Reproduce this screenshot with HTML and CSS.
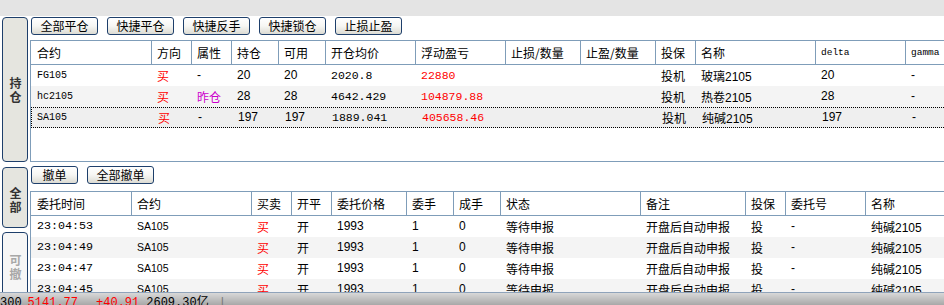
FILE: index.html
```html
<!DOCTYPE html>
<html lang="zh">
<head>
<meta charset="utf-8">
<title>持仓</title>
<link rel="stylesheet" href="styles.css">
</head>
<body>
<div class="topstrip"></div>
<div class="main">
  <div class="tabs">
    <div class="tab tab-pos"><span class="vt">持仓</span></div>
    <div class="tab tab-all"><span class="vt">全部</span></div>
    <div class="tab tab-cancel"><span class="vt">可撤</span></div>
  </div>
  <div class="content">
    <div class="toolbar tb1">
      <div class="btn">全部平仓</div>
      <div class="btn">快捷平仓</div>
      <div class="btn">快捷反手</div>
      <div class="btn">快捷锁仓</div>
      <div class="btn">止损止盈</div>
    </div>
    <div class="panel panel1">
      <div class="row head g1">
        <div>合约</div><div>方向</div><div>属性</div><div>持仓</div><div>可用</div><div>开仓均价</div><div>浮动盈亏</div><div>止损/数量</div><div>止盈/数量</div><div>投保</div><div>名称</div><div class="lm">delta</div><div class="lm">gamma</div>
      </div>
      <div class="row g1">
        <div class="code">FG105</div><div class="red">买</div><div class="sans">-</div><div class="sans">20</div><div class="sans">20</div><div class="mono">2020.8</div><div class="mono red">22880</div><div></div><div></div><div>投机</div><div>玻璃<span class="sans">2105</span></div><div class="sans">20</div><div class="sans">-</div>
      </div>
      <div class="row g1 alt">
        <div class="code">hc2105</div><div class="red">买</div><div class="pur">昨仓</div><div class="sans">28</div><div class="sans">28</div><div class="mono">4642.429</div><div class="mono red">104879.88</div><div></div><div></div><div>投机</div><div>热卷<span class="sans">2105</span></div><div class="sans">28</div><div class="sans">-</div>
      </div>
      <div class="row g1 sel">
        <div class="code">SA105</div><div class="red">买</div><div class="sans">-</div><div class="sans">197</div><div class="sans">197</div><div class="mono">1889.041</div><div class="mono red">405658.46</div><div></div><div></div><div>投机</div><div>纯碱<span class="sans">2105</span></div><div class="sans">197</div><div class="sans">-</div>
      </div>
    </div>
    <div class="toolbar tb2">
      <div class="btn sm">撤单</div>
      <div class="btn">全部撤单</div>
    </div>
    <div class="panel panel2">
      <div class="row head g2">
        <div>委托时间</div><div>合约</div><div>买卖</div><div>开平</div><div>委托价格</div><div>委手</div><div>成手</div><div>状态</div><div>备注</div><div>投保</div><div>委托号</div><div>名称</div>
      </div>
      <div class="row g2">
        <div class="time">23:04:53</div><div class="code2">SA105</div><div class="red">买</div><div>开</div><div class="sans">1993</div><div class="sans">1</div><div class="sans">0</div><div>等待申报</div><div>开盘后自动申报</div><div>投</div><div class="sans">-</div><div>纯碱<span class="sans">2105</span></div>
      </div>
      <div class="row g2 alt">
        <div class="time">23:04:49</div><div class="code2">SA105</div><div class="red">买</div><div>开</div><div class="sans">1993</div><div class="sans">1</div><div class="sans">0</div><div>等待申报</div><div>开盘后自动申报</div><div>投</div><div class="sans">-</div><div>纯碱<span class="sans">2105</span></div>
      </div>
      <div class="row g2">
        <div class="time">23:04:47</div><div class="code2">SA105</div><div class="red">买</div><div>开</div><div class="sans">1993</div><div class="sans">1</div><div class="sans">0</div><div>等待申报</div><div>开盘后自动申报</div><div>投</div><div class="sans">-</div><div>纯碱<span class="sans">2105</span></div>
      </div>
      <div class="row g2 alt">
        <div class="time">23:04:45</div><div class="code2">SA105</div><div class="red">买</div><div>开</div><div class="sans">1993</div><div class="sans">1</div><div class="sans">0</div><div>等待申报</div><div>开盘后自动申报</div><div>投</div><div class="sans">-</div><div>纯碱<span class="sans">2105</span></div>
      </div>
    </div>
  </div>
</div>
<div class="status">
  <span>300</span><span class="red s1">5141.77</span><span class="red s2">+40.91</span><span class="s3">2609.30亿</span><span class="bar">|</span>
</div>
</body>
</html>
```

FILE: styles.css
```css
* { box-sizing: border-box; margin: 0; padding: 0; }
html, body { width: 944px; height: 305px; overflow: hidden; background: #fff; }
body {
  font: 12px/1 "Noto Sans CJK SC", "Noto Sans", sans-serif;
  color: #000;
  display: flex;
  flex-direction: column;
}
.topstrip { height: 16px; flex: none; background: #e4e4e4; }
.main { flex: 1; display: flex; min-height: 0; overflow: hidden; }

.tabs { width: 30px; flex: none; display: flex; flex-direction: column; padding: 1px 0 0 2px; }
.tab {
  width: 26px; flex: none;
  border: 1px solid #1e3f6b; border-radius: 4px;
  background: #e5e5df;
  display: flex; align-items: center; justify-content: center;
  font-weight: bold; font-size: 12px; color: #333;
}
.vt { writing-mode: vertical-rl; text-orientation: upright; letter-spacing: 2px; line-height: 14px; }
.tab-pos { height: 145px; padding-top: 2px; }
.tab-all { height: 61px; margin-top: 5px; padding-top: 6px; }
.tab-cancel { height: 70px; margin-top: 4px; background: #f6f6f6; color: #a8a8a8; padding-top: 2px; }

.content { flex: 1; display: flex; flex-direction: column; min-width: 0; }
.toolbar { display: flex; gap: 9px; padding-left: 1px; flex: none; }
.tb1 { height: 24px; padding-top: 1px; }
.tb2 { height: 29px; padding-top: 4px; }
.btn {
  width: 67px; height: 18px;
  border: 1px solid #1e3f6b; border-radius: 3px;
  background: linear-gradient(#ffffff, #f6f6f3 50%, #dcdbd3);
  font-size: 12px; line-height: 16px; text-align: center;
}
.btn.sm { width: 47px; }

.panel { border-left: 1px solid #7f9db9; overflow: hidden; flex: none; }
.panel1 { height: 122px; border-bottom: 1px solid #7f9db9; }
.panel2 { flex: 1; min-height: 0; }

.row { display: grid; height: 21px; line-height: 21px; white-space: nowrap; }
.row > div { padding-left: 5px; overflow: hidden; }
.row > div:first-child { padding-left: 6px; }
.head { height: 25px; line-height: 23px; border-top: 1px solid #7f9db9; border-bottom: 1px solid #7f9db9; }
.head > div { border-right: 1px solid #7f9db9; }
.g1 { width: 965px; grid-template-columns: 121px 40px 40px 47px 47px 90px 90px 75px 75px 40px 120px 90px 90px; }
.g2 { width: 955px; grid-template-columns: 101px 120px 40px 40px 75px 47px 47px 140px 105px 40px 80px 120px; }
.alt { background: #f4f4f4; }
.sel { background: #efefef; border: 1px dotted #000; line-height: 19px; }
.sel > div:first-child { padding-left: 5px; }

.red { color: #f00; }
.pur { color: #cc00cc; }
.sans { font-family: "Liberation Sans", Arial, sans-serif; font-size: 12px; }
.mono { font-family: "Liberation Mono", monospace; font-size: 11.5px; }
.code { font-family: "Liberation Mono", monospace; font-size: 10px; }
.code2 { font-family: "Liberation Sans", Arial, sans-serif; font-size: 10.5px; }
.time { font-family: "Liberation Mono", monospace; font-size: 11.7px; }
.lm { font-family: "Liberation Mono", monospace; font-size: 9.5px; }

.status {
  height: 13px; flex: none;
  background: linear-gradient(#d8d8d8, #a8a8a8);
  border-top: 1px solid #8fa3ba;
  overflow: hidden;
  font: 12px/14px "Liberation Mono", monospace;
  padding: 3px 0 0 0;
  white-space: nowrap;
  display: flex;
}
.s1 { margin-left: 6px; }
.s2 { margin-left: 18px; }
.s3 { margin-left: 7px; font-family: "Liberation Mono", "Noto Sans CJK SC", monospace; }
.bar { margin-left: 10px; color: #777; }
```
